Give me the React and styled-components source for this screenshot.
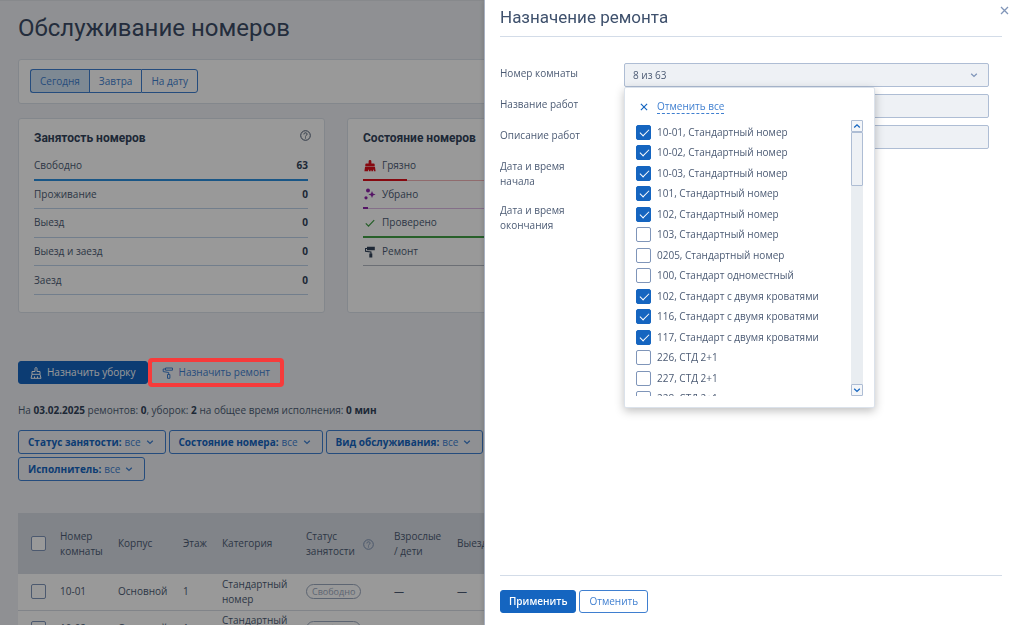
import React, { useState } from 'react';
import styled, { createGlobalStyle, css } from 'styled-components';

const GlobalStyle = createGlobalStyle`
    * {
        box-sizing: border-box;
    }
    body {
        margin: 0;
        background: #eef1f5;
        color: #4c5b74;
        font: 10px/15px 'Open Sans', 'Noto Sans', sans-serif;
        overflow: hidden;
    }
    button, input, select {
        font: inherit;
        color: inherit;
        margin: 0;
    }
`;

const Page = styled.main`
    height: 100vh;
    overflow: hidden;
    padding: 12px 31px 0 18px;
    border-top: 1px solid #e2e5ea;
`;

const Title = styled.h1`
    margin: 0 0 15px;
    color: #3c4c66;
    font: 400 24px/31px Roboto, sans-serif;
`;

const Panel = styled.section`
    background: #fff;
    border: 1px solid #dbe1ea;
    border-radius: 3px;
`;

const DateBar = styled(Panel)`
    display: flex;
    padding: 9px 11px 10px;
`;

const DateButton = styled.button`
    height: 24px;
    padding: 0 9px;
    border: 1px solid #3f7fd0;
    border-right-width: 0;
    background: ${(props) => (props.$active ? '#d3e5f5' : '#fff')};
    color: #3f7fd0;

    &:first-child {
        border-radius: 3px 0 0 3px;
    }
    &:last-child {
        border-right-width: 1px;
        border-radius: 0 3px 3px 0;
    }
`;

const Cards = styled.div`
    display: grid;
    grid-template-columns: repeat(3, 1fr);
    gap: 22px;
    margin-top: 14px;
`;

const Card = styled(Panel)`
    padding: 9px 16px 17px 15px;
`;

const CardHead = styled.div`
    display: flex;
    justify-content: space-between;
    height: 24px;
`;

const CardTitle = styled.h2`
    margin: 0;
    color: #32435a;
    font: 700 12px/20px Roboto, sans-serif;
    white-space: nowrap;
`;

const HelpButton = styled.button`
    display: flex;
    flex: none;
    width: 12px;
    height: 14px;
    padding: 2px 0 0;
    margin-right: -4px;
    border: 0;
    background: none;
    color: ${(props) => (props.$pale ? '#7d92b3' : '#4c5b74')};
`;

const Stats = styled.ul`
    display: grid;
    grid-template-rows: repeat(5, 1fr);
    height: 143px;
    margin: 0;
    padding: 0;
    list-style: none;
`;

const Stat = styled.li`
    display: flex;
    align-items: center;
    gap: 6px;
    border-bottom: ${(props) => (props.$thick ? 2 : 1)}px solid
        ${(props) => props.$line};
    position: relative;

    b {
        margin-left: auto;
        color: #32435a;
    }
    svg {
        margin-left: 1px;
    }
`;

const StatBar = styled.span`
    position: absolute;
    left: 0;
    bottom: -1px;
    height: 2px;
    background: ${(props) => props.$color};
`;

const Actions = styled.div`
    display: flex;
    gap: 2px;
    margin-top: 48px;
`;

const Button = styled.button`
    display: inline-flex;
    align-items: center;
    justify-content: center;
    gap: 5px;
    height: 23px;
    padding: 0 ${(props) => (props.$wide ? 11 : 9)}px;
    border: 1px solid #3f7fd0;
    border-radius: 3px;
    background: #fff;
    color: #3f7fd0;
    white-space: nowrap;

    ${(props) =>
        props.$primary &&
        css`
            border-color: #1565c0;
            background: #1565c0;
            color: #fff;
        `}
    ${(props) =>
        props.$strong &&
        css`
            padding: 0 8px;
            font-weight: 600;
        `}
    ${(props) =>
        props.$plain &&
        css`
            background: transparent;
        `}
`;

const Highlighted = styled.div`
    position: relative;
    display: flex;

    &::after {
        content: '';
        position: absolute;
        inset: -3px -2px;
        z-index: 3;
        border: 4px solid #f73b3b;
        border-radius: 4px;
        pointer-events: none;
    }
`;

const Summary = styled.p`
    margin: 19px 0 12px;

    b {
        color: #32435a;
    }
`;

const Filters = styled.div`
    display: flex;
    flex-wrap: wrap;
    gap: 3px;
    max-width: 520px;
`;

const Filter = styled.label`
    display: flex;
    align-items: center;
    height: 24px;
    padding: 0 11px 0 9px;
    border: 1px solid #3f7fd0;
    border-radius: 3px;
    color: #3f7fd0;
    white-space: nowrap;

    b {
        margin-right: 3px;
        color: #1565c0;
    }
    svg {
        margin-left: 4px;
    }
`;

const FilterSelect = styled.select`
    appearance: none;
    border: 0;
    padding: 0;
    background: none;
`;

const Table = styled.table`
    width: 100%;
    margin-top: 32px;
    border-collapse: collapse;
    table-layout: fixed;
    background: #fff;
    text-align: left;

    th {
        height: 61px;
        padding: 0;
        background: #d7dce4;
        font-weight: 400;
    }
    td {
        height: 36px;
        padding: 0;
        border-bottom: 1px solid #d7dce4;
    }
    th:first-child,
    td:first-child {
        padding-left: 13px;
    }
`;

const HeadWithHelp = styled.div`
    display: flex;
    align-items: center;
    gap: 8px;
`;

const Pill = styled.span`
    display: inline-block;
    padding: 0 5px;
    border: 1px solid #9ba8be;
    border-radius: 8px;
    color: #9ba8be;
    font-size: 9px;
    line-height: 13px;
`;

const Checkbox = styled.input.attrs({ type: 'checkbox' })`
    appearance: none;
    display: block;
    position: relative;
    flex: none;
    width: 15px;
    height: 15px;
    border: 1px solid #7f95b9;
    border-radius: 2px;
    background: #fff;

    &:checked {
        border-color: #1565c0;
        background: #1565c0;
    }
    &:checked::after {
        content: '';
        position: absolute;
        left: 3px;
        top: 3px;
        width: 8px;
        height: 4px;
        border: solid #fff;
        border-width: 0 0 1px 1px;
        transform: rotate(-45deg);
    }
`;

const Overlay = styled.div`
    position: fixed;
    inset: 0;
    z-index: 2;
    background: rgba(0, 0, 0, 0.4);
`;

const Drawer = styled.aside`
    position: fixed;
    top: 0;
    right: 0;
    bottom: 0;
    z-index: 4;
    display: flex;
    flex-direction: column;
    width: 530px;
    max-width: 100%;
    padding: 0 12px 0 15px;
    border-left: 1px solid #a8b1c1;
    background: #fff;
    box-shadow: 0 0 6px rgba(0, 0, 0, 0.2);
`;

const DrawerTitle = styled.h2`
    margin: 0;
    padding: 6px 0 8px;
    border-bottom: 1px solid #d3dce8;
    color: #3f516d;
    font: 400 17px/22px Roboto, sans-serif;
`;

const Close = styled.button`
    position: absolute;
    top: 6px;
    right: 5px;
    display: flex;
    padding: 0;
    border: 0;
    background: none;
    color: #8095b8;
`;

const Form = styled.form`
    display: flex;
    flex: 1;
    flex-direction: column;
    gap: 7px;
    padding: 26px 13px 0 0;
`;

const Field = styled.div`
    display: grid;
    grid-template-columns: 94px 1fr;
    column-gap: 30px;
    position: relative;
`;

const FieldLabel = styled.label`
    padding: 3px 0 4px;
`;

const control = css`
    width: 100%;
    height: 24px;
    padding: 0 8px;
    border: 1px solid #aebdd4;
    border-radius: 2px;
    background: #eef1f5;
`;

const TextInput = styled.input`
    ${control}
`;

const SelectWrap = styled.div`
    display: flex;
    align-items: center;
    position: relative;

    svg {
        position: absolute;
        right: 11px;
        color: #7f95b9;
        pointer-events: none;
    }
`;

const RoomSelect = styled.select`
    ${control}
    appearance: none;
`;

const Dropdown = styled.div`
    position: absolute;
    top: 24px;
    left: 124px;
    z-index: 5;
    width: 251px;
    padding: 10px 11px 11px;
    border: 1px solid #dbe2eb;
    border-radius: 2px;
    background: #fff;
    box-shadow: 0 3px 10px rgba(0, 0, 0, 0.25);
`;

const ClearAll = styled.button`
    display: flex;
    align-items: center;
    gap: 9px;
    height: 17px;
    padding: 0 4px;
    margin-bottom: 5px;
    border: 0;
    background: none;
    color: #1565c0;

    span {
        border-bottom: 1px dashed #3f7fd0;
        color: #3f7fd0;
        line-height: 14px;
    }
`;

const OptionsBox = styled.div`
    display: flex;
    justify-content: space-between;
    height: 276px;
    overflow: hidden;
`;

const Options = styled.div`
    display: grid;
    grid-auto-rows: 1fr;
    height: 287px;
    margin-top: 2px;
`;

const Option = styled.label`
    display: flex;
    align-items: center;
    gap: 6px;
    white-space: nowrap;
`;

const Scrollbar = styled.div`
    display: flex;
    flex-direction: column;
    width: 12px;
    background: #e9edf1;
`;

const ScrollButton = styled.button`
    display: flex;
    align-items: center;
    justify-content: center;
    height: 12px;
    padding: 0;
    border: 1px solid #aebdd4;
    border-radius: 1px;
    background: #f4f6f9;
    color: #1565c0;
`;

const Thumb = styled.div`
    height: 54px;
    margin-bottom: auto;
    border: 1px solid #aebdd4;
    border-radius: 1px;
    background: #eef1f5;
`;

const Footer = styled.footer`
    display: flex;
    gap: 3px;
    padding: 14px 0 12px;
    border-top: 1px solid #d3dce8;
`;

function Chevron({ up, size = 8 }) {
    return (
        <svg width={size} height={size} viewBox="0 0 8 8" fill="none">
            <path
                d={up ? 'M1.2 5.4 4 2.8l2.8 2.6' : 'M1.2 2.8 4 5.4l2.8-2.6'}
                stroke="currentColor"
                strokeWidth="1.3"
            />
        </svg>
    );
}

function Cross({ size = 9 }) {
    return (
        <svg width={size} height={size} viewBox="0 0 9 9" fill="none">
            <path
                d="m1 1 7 7M8 1 1 8"
                stroke="currentColor"
                strokeWidth="1.3"
            />
        </svg>
    );
}

function HelpIcon() {
    return (
        <svg width="11" height="11" viewBox="0 0 11 11" fill="none">
            <circle cx="5.5" cy="5.5" r="4.8" stroke="currentColor" />
            <path
                d="M3.9 4.4c0-1 .7-1.6 1.6-1.6s1.6.6 1.6 1.4c0 1.1-1.6 1.1-1.6 2.3M5.5 7.4v1.1"
                stroke="currentColor"
            />
        </svg>
    );
}

function DirtyIcon() {
    return (
        <svg width="12" height="12" viewBox="0 0 12 12" fill="#e0101c">
            <path d="M4.6 1.4a1.4 1.4 0 0 1 2.8 0V3.6h2.4c.5 0 .9.4.9.9v2H1.3v-2c0-.5.4-.9.9-.9h2.4zM1 7.1h10l.6 4.1H9.8V9.8H9v1.4H7.4v-.9h-.8v.9H5V9.8h-.8v1.4H.4z" />
        </svg>
    );
}

function CleanIcon() {
    return (
        <svg width="12" height="12" viewBox="0 0 12 12" fill="#8e24aa">
            <circle cx="4" cy="2.6" r="2" />
            <circle cx="2" cy="9.8" r="1.6" />
            <path d="m8 3 1 2.4 2.6 1.1L9 7.6 8 10 7 7.6 4.4 6.5 7 5.4z" />
        </svg>
    );
}

function CheckedIcon() {
    return (
        <svg width="12" height="12" viewBox="0 0 12 12" fill="none">
            <path
                d="m1.8 6.4 2.7 2.7 5.7-6"
                stroke="#43a047"
                strokeWidth="1.3"
            />
        </svg>
    );
}

function RollerIcon() {
    return (
        <svg width="12" height="12" viewBox="0 0 12 12" fill="#32435a">
            <path d="M3 .8h7.8v3.4H3V3.1H2v1.7l5.5.8v1.8h.8v4H5.3v-4h1.1v-.9L1 5.8V2h2z" />
        </svg>
    );
}

function BrushOutlineIcon() {
    return (
        <svg
            width="12"
            height="12"
            viewBox="0 0 12 12"
            fill="none"
            stroke="currentColor">
            <path d="M5 4.5v-3c0-1.3 2-1.3 2 0v3h3v2.8H2V4.5zM2 7.3l-1 4h10l-1-4M4.5 11V9.4M7.5 11V9.4" />
        </svg>
    );
}

function RollerOutlineIcon() {
    return (
        <svg
            width="12"
            height="12"
            viewBox="0 0 12 12"
            fill="none"
            stroke="currentColor">
            <path d="M3.5 1h7v2.2h-7zM3.5 2H1.2v2.6l5.5.9v2M5.5 7.5h2.4v3.8H5.5z" />
        </svg>
    );
}

const occupancy = [
    ['Свободно', 63],
    ['Проживание', 0],
    ['Выезд', 0],
    ['Выезд и заезд', 0],
    ['Заезд', 0],
];

const states = [
    { name: 'Грязно', icon: DirtyIcon, line: '#f0b4b8', bar: '#e0101c', part: 16 },
    { name: 'Убрано', icon: CleanIcon, line: '#dcb9e4', bar: '#8e24aa', part: 2 },
    { name: 'Проверено', icon: CheckedIcon, line: '#43a047', bar: '#43a047', part: 100 },
    { name: 'Ремонт', icon: RollerIcon, line: '#b4bac4' },
];

const filters = [
    'Статус занятости:',
    'Состояние номера:',
    'Вид обслуживания:',
    'Исполнитель:',
];

const rooms = [
    ['10-01, Стандартный номер', true],
    ['10-02, Стандартный номер', true],
    ['10-03, Стандартный номер', true],
    ['101, Стандартный номер', true],
    ['102, Стандартный номер', true],
    ['103, Стандартный номер', false],
    ['0205, Стандартный номер', false],
    ['100, Стандарт одноместный', false],
    ['102, Стандарт с двумя кроватями', true],
    ['116, Стандарт с двумя кроватями', true],
    ['117, Стандарт с двумя кроватями', true],
    ['226, СТД 2+1', false],
    ['227, СТД 2+1', false],
    ['228, СТД 2+1', false],
];

function RoomPicker() {
    const [checked, setChecked] = useState(rooms.map((room) => room[1]));

    return (
        <Dropdown>
            <ClearAll
                type="button"
                onClick={() => setChecked(rooms.map(() => false))}>
                <Cross size={8} />
                <span>Отменить все</span>
            </ClearAll>
            <OptionsBox>
                <Options>
                    {rooms.map(([name], index) => (
                        <Option key={name}>
                            <Checkbox
                                checked={checked[index]}
                                onChange={() =>
                                    setChecked(
                                        checked.map((v, i) =>
                                            i === index ? !v : v,
                                        ),
                                    )
                                }
                            />
                            {name}
                        </Option>
                    ))}
                </Options>
                <Scrollbar>
                    <ScrollButton type="button" aria-label="Вверх">
                        <Chevron up />
                    </ScrollButton>
                    <Thumb />
                    <ScrollButton type="button" aria-label="Вниз">
                        <Chevron />
                    </ScrollButton>
                </Scrollbar>
            </OptionsBox>
        </Dropdown>
    );
}

function RoomsTable() {
    return (
        <Table>
            <colgroup>
                <col style={{ width: 42 }} />
                <col style={{ width: 58 }} />
                <col style={{ width: 65 }} />
                <col style={{ width: 39 }} />
                <col style={{ width: 84 }} />
                <col style={{ width: 88 }} />
                <col style={{ width: 63 }} />
                <col />
            </colgroup>
            <thead>
                <tr>
                    <th>
                        <Checkbox aria-label="Выбрать все" />
                    </th>
                    <th>
                        Номер
                        <br />
                        комнаты
                    </th>
                    <th>Корпус</th>
                    <th>Этаж</th>
                    <th>Категория</th>
                    <th>
                        <HeadWithHelp>
                            <span>
                                Статус
                                <br />
                                занятости
                            </span>
                            <HelpButton $pale aria-label="Справка">
                                <HelpIcon />
                            </HelpButton>
                        </HeadWithHelp>
                    </th>
                    <th>
                        Взрослые
                        <br />/ дети
                    </th>
                    <th>Выезд</th>
                </tr>
            </thead>
            <tbody>
                {['10-01', '10-02'].map((number) => (
                    <tr key={number}>
                        <td>
                            <Checkbox aria-label={number} />
                        </td>
                        <td>{number}</td>
                        <td>Основной</td>
                        <td>1</td>
                        <td>
                            Стандартный
                            <br />
                            номер
                        </td>
                        <td>
                            <Pill>Свободно</Pill>
                        </td>
                        <td>—</td>
                        <td>—</td>
                    </tr>
                ))}
            </tbody>
        </Table>
    );
}

export default function App() {
    const [day, setDay] = useState('Сегодня');

    return (
        <>
            <GlobalStyle />
            <Page>
                <Title>Обслуживание номеров</Title>
                <DateBar>
                    {['Сегодня', 'Завтра', 'На дату'].map((name) => (
                        <DateButton
                            key={name}
                            $active={day === name}
                            onClick={() => setDay(name)}>
                            {name}
                        </DateButton>
                    ))}
                </DateBar>
                <Cards>
                    <Card>
                        <CardHead>
                            <CardTitle>Занятость номеров</CardTitle>
                            <HelpButton aria-label="Справка">
                                <HelpIcon />
                            </HelpButton>
                        </CardHead>
                        <Stats>
                            {occupancy.map(([name, count]) => (
                                <Stat
                                    key={name}
                                    $thick={count > 0}
                                    $line={count > 0 ? '#2b8fe0' : '#bfd3ea'}>
                                    {name}
                                    <b>{count}</b>
                                </Stat>
                            ))}
                        </Stats>
                    </Card>
                    <Card>
                        <CardHead>
                            <CardTitle>Состояние номеров</CardTitle>
                        </CardHead>
                        <Stats>
                            {states.map(({ name, icon: Icon, line, bar, part }) => (
                                <Stat key={name} $line={line}>
                                    <Icon />
                                    {name}
                                    {bar && (
                                        <StatBar
                                            $color={bar}
                                            style={{ width: part + '%' }}
                                        />
                                    )}
                                </Stat>
                            ))}
                        </Stats>
                    </Card>
                </Cards>
                <Actions>
                    <Button $primary $wide>
                        <BrushOutlineIcon />
                        Назначить уборку
                    </Button>
                    <Highlighted>
                        <Button $plain $wide>
                            <RollerOutlineIcon />
                            Назначить ремонт
                        </Button>
                    </Highlighted>
                </Actions>
                <Summary>
                    На <b>03.02.2025</b> ремонтов: <b>0</b>, уборок: <b>2</b> на
                    общее время исполнения: <b>0 мин</b>
                </Summary>
                <Filters>
                    {filters.map((name) => (
                        <Filter key={name}>
                            <b>{name}</b>
                            <FilterSelect>
                                <option>все</option>
                            </FilterSelect>
                            <Chevron />
                        </Filter>
                    ))}
                </Filters>
                <RoomsTable />
            </Page>
            <Overlay />
            <Drawer>
                <DrawerTitle>Назначение ремонта</DrawerTitle>
                <Close aria-label="Закрыть">
                    <Cross />
                </Close>
                <Form id="repair" onSubmit={(e) => e.preventDefault()}>
                    <Field>
                        <FieldLabel htmlFor="room">Номер комнаты</FieldLabel>
                        <SelectWrap>
                            <RoomSelect id="room">
                                <option>8 из 63</option>
                            </RoomSelect>
                            <Chevron />
                        </SelectWrap>
                        <RoomPicker />
                    </Field>
                    <Field>
                        <FieldLabel htmlFor="work">Название работ</FieldLabel>
                        <TextInput id="work" type="text" />
                    </Field>
                    <Field>
                        <FieldLabel htmlFor="about">Описание работ</FieldLabel>
                        <TextInput id="about" type="text" />
                    </Field>
                    <Field>
                        <FieldLabel as="span">Дата и время начала</FieldLabel>
                    </Field>
                    <Field>
                        <FieldLabel as="span">Дата и время окончания</FieldLabel>
                    </Field>
                </Form>
                <Footer>
                    <Button $primary $strong form="repair">
                        Применить
                    </Button>
                    <Button>Отменить</Button>
                </Footer>
            </Drawer>
        </>
    );
}
